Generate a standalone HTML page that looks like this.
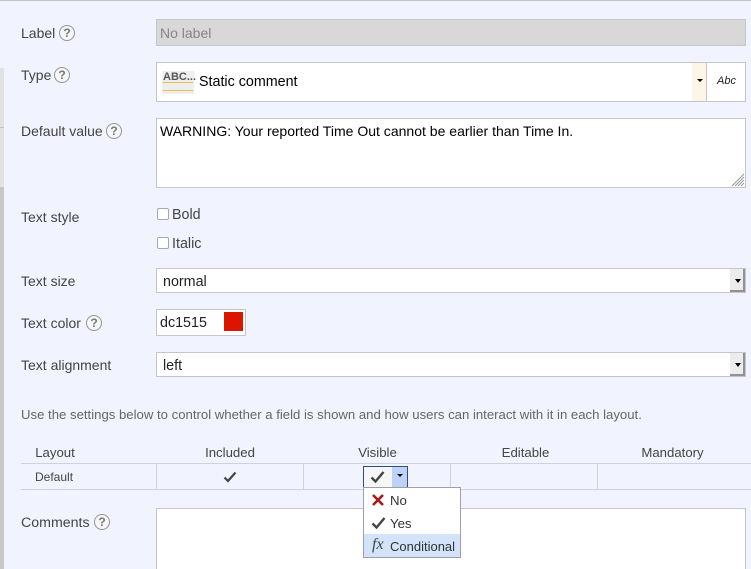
<!DOCTYPE html>
<html><head><meta charset="utf-8">
<style>
html,body{margin:0;padding:0;background:#f1f4ff;}
#p{position:relative;width:751px;height:569px;overflow:hidden;background:#f1f4ff;font-family:"Liberation Sans",sans-serif;font-size:14px;color:#000;}
#p div,#p span.a,#p svg{position:absolute;}
.t{white-space:nowrap;line-height:16px;}
.l{color:#444;left:21px;}
.b{background:#fff;border:1px solid #c6c6c9;box-sizing:border-box;}
.q{width:16px;height:16px;border:1px solid #949494;border-radius:50%;box-sizing:border-box;background:#f7f7f7;color:#777;font-size:12px;font-weight:bold;line-height:14px;text-align:center;}
.cb{width:10px;height:10px;background:#fff;border:1px solid #a8a8a8;border-radius:2px;box-sizing:content-box;}
.hl{background:#ced2de;height:1px;}
.vl{background:#ced2de;width:1px;}
.sm{font-size:13.2px;color:#444;text-align:center;}
.btn{left:730px;width:15px;height:23px;background:#ececec;box-sizing:border-box;border-right:2px solid #929292;border-bottom:2px solid #929292;}
</style></head><body>
<div id="p">
<div style="left:0;top:0;width:751px;height:1px;background:#c4c4c4"></div>
<div style="left:0;top:68px;width:4px;height:119px;background:#e2e2e2"></div>
<div style="left:0;top:127px;width:4px;height:1px;background:#c4c4c4"></div>
<div style="left:0;top:187px;width:4px;height:382px;background:#c8c8c8"></div>

<div class="t l" style="top:25px">Label</div>
<div class="q" style="left:59px;top:25px">?</div>
<div class="b" style="left:156px;top:19px;width:590px;height:27px;background:#d8d8d8"></div>
<div class="t" style="left:160px;top:25px;color:#858585">No label</div>

<div class="t l" style="top:67px">Type</div>
<div class="q" style="left:54px;top:67px">?</div>
<div class="b" style="left:156px;top:62px;width:590px;height:40px"></div>
<div style="left:162px;top:71px;width:32px;height:23px;background:#eee"></div>
<div class="t" style="left:163px;top:70px;font-size:11px;font-weight:bold;color:#555;line-height:14px">ABC...</div>
<div style="left:163px;top:82px;width:30px;height:1px;background:#f0c040"></div>
<div style="left:163px;top:90px;width:30px;height:1px;background:#f0c040"></div>
<div class="t" style="left:199px;top:74px;font-size:14.3px">Static comment</div>
<div style="left:692px;top:63px;width:14px;height:38px;background:#fdf6e6"></div>
<div style="left:697px;top:79px;width:0;height:0;border:3px solid transparent;border-top:3px solid #000"></div>
<div style="left:706px;top:63px;width:1px;height:38px;background:#c6c6c9"></div>
<div class="t" style="left:717px;top:74px;font-size:11px;font-style:italic;color:#222;line-height:14px">Abc</div>

<div class="t l" style="top:123px">Default value</div>
<div class="q" style="left:106px;top:123px">?</div>
<div class="b" style="left:156px;top:118px;width:590px;height:70px"></div>
<div class="t" style="left:160px;top:123px;font-size:14.03px">WARNING: Your reported Time Out cannot be earlier than Time In.</div>
<svg style="left:731px;top:173px" width="14" height="14" viewBox="0 0 14 14"><path d="M13 1L1 13M13 4L4 13M13 7L7 13M13 10L10 13" stroke="#999" stroke-width="1" fill="none"/></svg>

<div class="t l" style="top:209px">Text style</div>
<div class="cb" style="left:157px;top:208px"></div>
<div class="t" style="left:172px;top:207px;color:#444;font-size:14.3px">Bold</div>
<div class="cb" style="left:157px;top:237px"></div>
<div class="t" style="left:172px;top:236px;color:#444;font-size:14.3px">Italic</div>

<div class="t l" style="top:273px">Text size</div>
<div class="b" style="left:156px;top:268px;width:590px;height:25px"></div>
<div class="t" style="left:163px;top:274px;color:#222;font-size:14.3px">normal</div>
<div class="btn" style="top:269px"></div>
<div style="left:735px;top:279px;width:0;height:0;border:3px solid transparent;border-top:4px solid #000"></div>

<div class="t l" style="top:315px">Text color</div>
<div class="q" style="left:86px;top:315px">?</div>
<div class="b" style="left:156px;top:309px;width:90px;height:27px"></div>
<div class="t" style="left:160px;top:315px;color:#222;font-size:14.3px">dc1515</div>
<div style="left:224px;top:312px;width:19px;height:19px;background:#dc1500"></div>

<div class="t l" style="top:357px">Text alignment</div>
<div class="b" style="left:156px;top:352px;width:590px;height:25px"></div>
<div class="t" style="left:163px;top:358px;color:#222;font-size:14.3px">left</div>
<div class="btn" style="top:353px"></div>
<div style="left:735px;top:363px;width:0;height:0;border:3px solid transparent;border-top:4px solid #000"></div>

<div class="t" style="left:21px;top:407px;font-size:13.17px;color:#666">Use the settings below to control whether a field is shown and how users can interact with it in each layout.</div>

<div class="t sm" style="left:21px;top:445px;width:68px">Layout</div>
<div class="t sm" style="left:157px;top:445px;width:146px">Included</div>
<div class="t sm" style="left:304px;top:445px;width:147px">Visible</div>
<div class="t sm" style="left:452px;top:445px;width:147px">Editable</div>
<div class="t sm" style="left:598px;top:445px;width:149px">Mandatory</div>
<div class="hl" style="left:21px;top:463px;width:730px"></div>
<div class="hl" style="left:21px;top:489px;width:730px"></div>
<div class="vl" style="left:156px;top:464px;height:25px"></div>
<div class="vl" style="left:303px;top:464px;height:25px"></div>
<div class="vl" style="left:450px;top:464px;height:25px"></div>
<div class="vl" style="left:597px;top:464px;height:25px"></div>
<div class="t" style="left:35px;top:469px;font-size:12px;color:#444">Default</div>
<svg style="left:223px;top:471px" width="14" height="12" viewBox="0 0 14 12"><path d="M1.5 6.5L5 10L12.5 1.5" stroke="#444" stroke-width="2.2" fill="none"/></svg>

<div class="t l" style="top:515px;font-size:14.2px">Comments</div>
<div class="q" style="left:94px;top:514px">?</div>
<div class="b" style="left:156px;top:508px;width:590px;height:70px"></div>

<div style="left:363px;top:466px;width:45px;height:22px;box-sizing:border-box;border:1px solid #2c4d85;background:#f6f6f6"></div>
<div style="left:392px;top:467px;width:15px;height:20px;background:#bcd2f7"></div>
<div style="left:397px;top:474px;width:0;height:0;border:3px solid transparent;border-top:3px solid #000"></div>
<svg style="left:370px;top:470px" width="15" height="14" viewBox="0 0 15 14"><path d="M1.5 7.5L5.5 11.5L13.5 2" stroke="#444" stroke-width="2.4" fill="none"/></svg>

<div style="left:363px;top:487px;width:98px;height:71px;box-sizing:border-box;background:#fff;border:1px solid #a0a0a4"></div>
<div style="left:364px;top:534px;width:96px;height:23px;background:#d2e3fa"></div>
<svg style="left:371px;top:493px" width="14" height="14" viewBox="0 0 14 14"><path d="M2 2L12 12M12 2L2 12" stroke="#a51c1c" stroke-width="2.6" fill="none"/></svg>
<svg style="left:371px;top:516px" width="15" height="14" viewBox="0 0 15 14"><path d="M1.5 7.5L5.5 11.5L13.5 2" stroke="#444" stroke-width="2.4" fill="none"/></svg>
<div class="t" style="left:390px;top:493px;font-size:13.2px;color:#333">No</div>
<div class="t" style="left:390px;top:516px;font-size:13.2px;color:#333">Yes</div>
<div class="t" style="left:372px;top:537px;font-family:'Liberation Serif',serif;font-style:italic;font-size:16px;color:#444;line-height:16px">fx</div>
<div class="t" style="left:390px;top:539px;font-size:13px;color:#333">Conditional</div>
</div>
</body></html>
